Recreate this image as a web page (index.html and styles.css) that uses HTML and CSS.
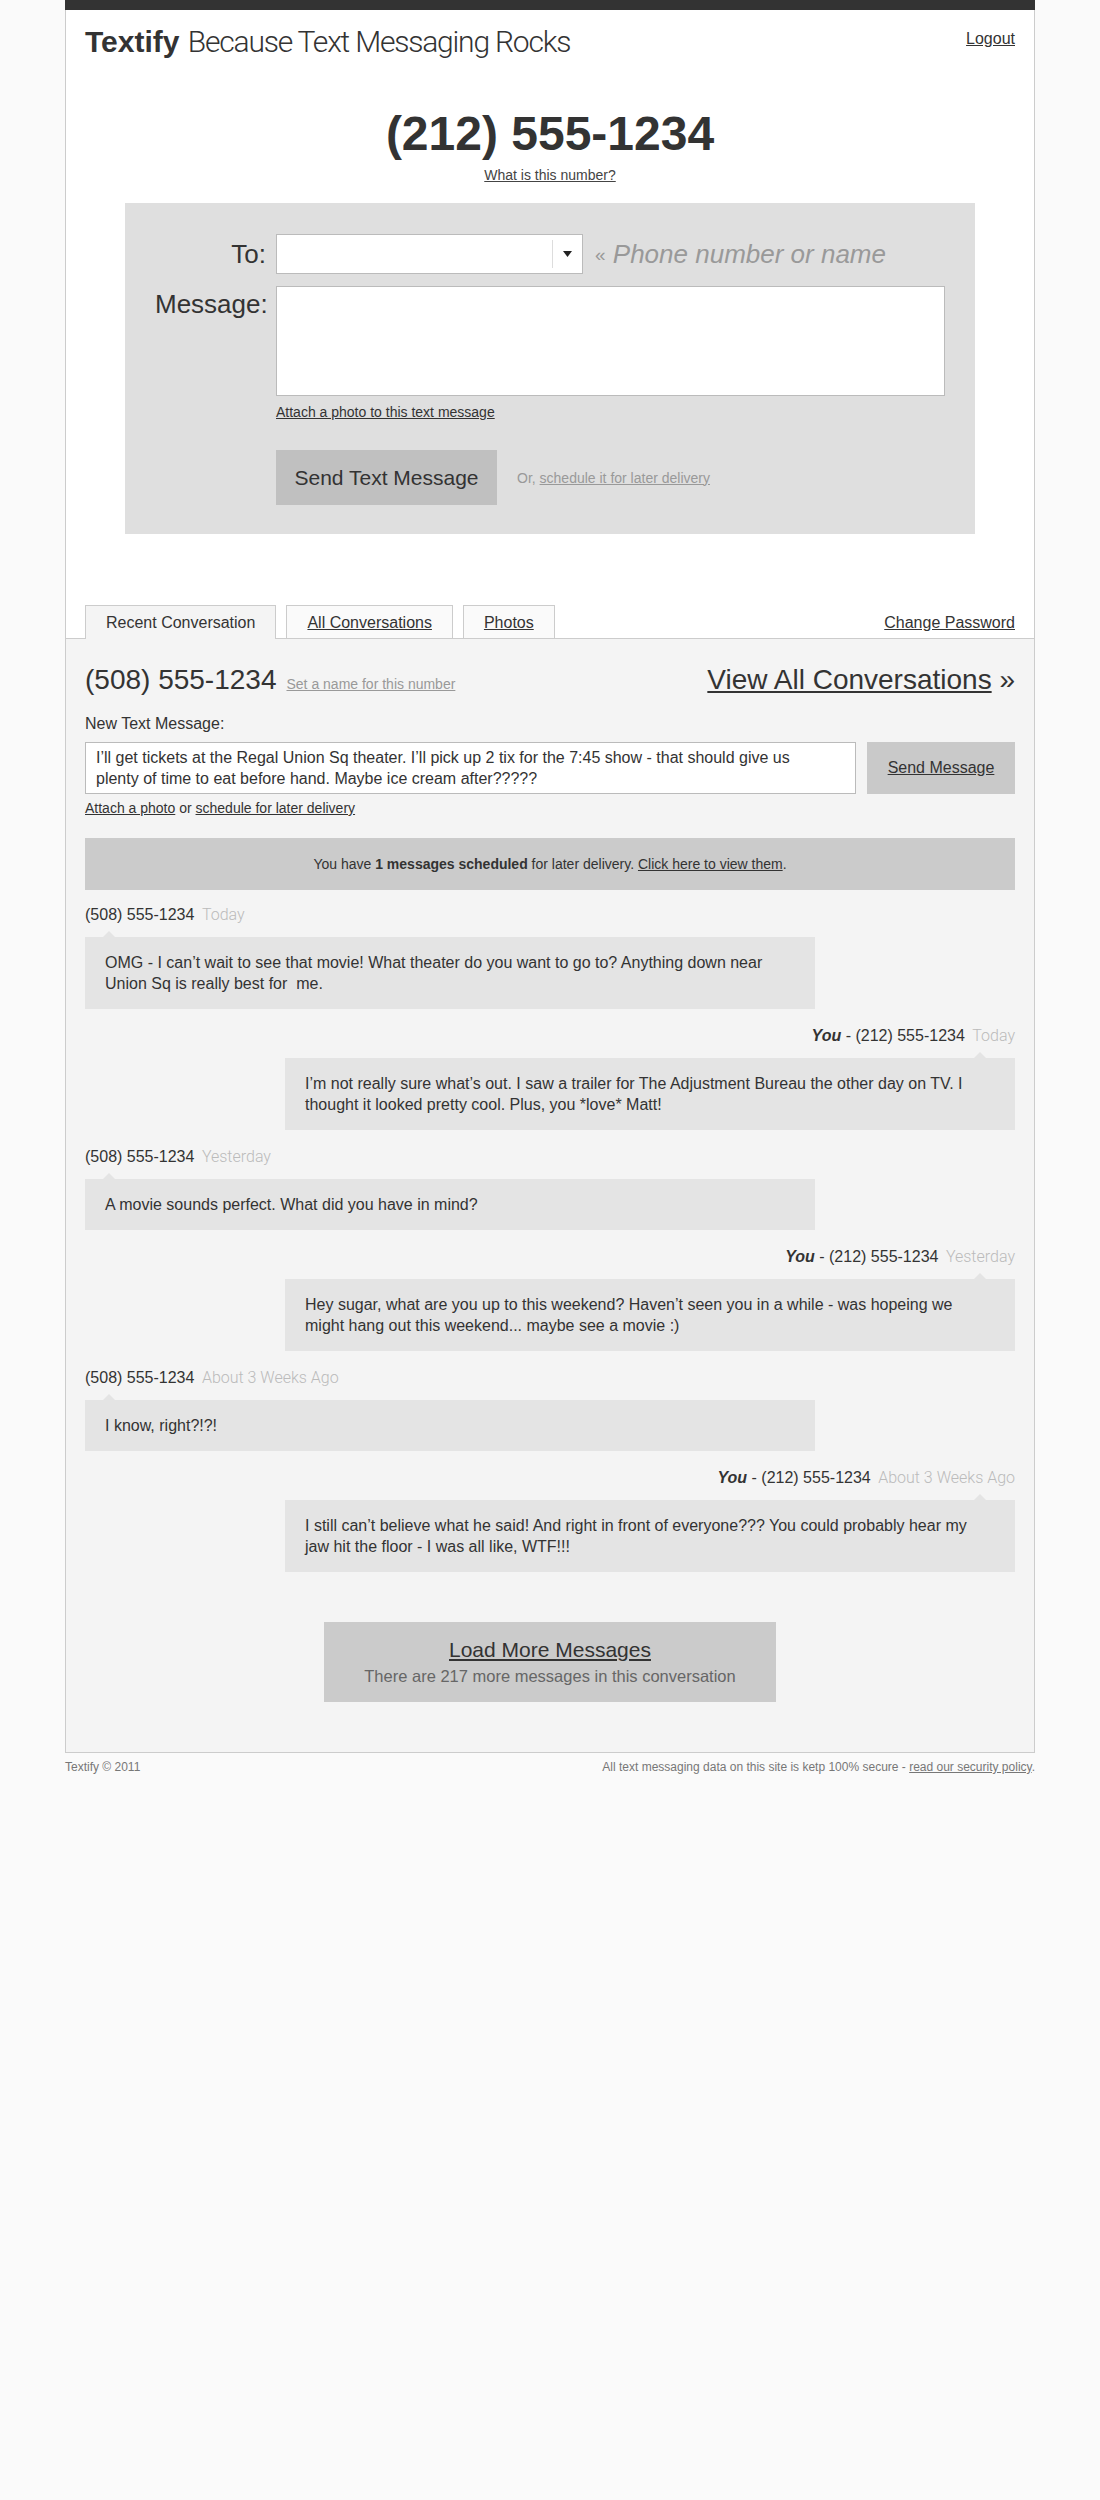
FILE: index.html
```html
<!DOCTYPE html>
<html lang="en">
<head>
<meta charset="utf-8">
<title>Textify - Because Text Messaging Rocks</title>
<link rel="stylesheet" href="styles.css">
</head>
<body>
<div class="page">
  <div class="topbar"></div>
  <div class="main">
    <header class="header">
      <h1 class="brand"><span class="brand-name">Textify</span> <span class="brand-tag">Because Text Messaging Rocks</span></h1>
      <a class="logout" href="#">Logout</a>
    </header>

    <section class="hero">
      <div class="my-number">(212) 555-1234</div>
      <a class="what-link" href="#">What is this number?</a>
    </section>

    <form class="compose">
      <label class="label">To:</label>
      <div class="to-field">
        <div class="select">
          <span class="select-arrow"><svg width="9" height="6" viewBox="0 0 9 6"><path d="M0 0H9L4.5 6Z" fill="#222"/></svg></span>
        </div>
        <span class="hint"><span class="laquo">«</span> Phone number or name</span>
      </div>

      <label class="label label-msg">Message:</label>
      <div class="field">
        <textarea class="msg-input"></textarea>
        <div class="attach-row"><a href="#">Attach a photo to this text message</a></div>
        <div class="send-row">
          <button type="button" class="send-btn">Send Text Message</button>
          <span class="later">Or, <a href="#">schedule it for later delivery</a></span>
        </div>
      </div>
    </form>

    <nav class="tabs">
      <span class="tab active">Recent Conversation</span>
      <a class="tab" href="#">All Conversations</a>
      <a class="tab" href="#">Photos</a>
      <a class="change-pw" href="#">Change Password</a>
    </nav>

    <section class="panel">
      <div class="convo-head">
        <div class="convo-title">
          <span class="convo-number">(508) 555-1234</span>
          <a class="set-name" href="#">Set a name for this number</a>
        </div>
        <div class="view-all"><a href="#">View All Conversations</a> <span class="raquo">»</span></div>
      </div>

      <div class="new-label">New Text Message:</div>
      <div class="reply">
        <textarea class="reply-text">I’ll get tickets at the Regal Union Sq theater. I’ll pick up 2 tix for the 7:45 show - that should give us plenty of time to eat before hand. Maybe ice cream after?????</textarea>
        <button type="button" class="reply-btn">Send Message</button>
      </div>
      <div class="reply-links"><a href="#">Attach a photo</a> or <a href="#">schedule for later delivery</a></div>

      <div class="scheduled">You have <strong>1 messages scheduled</strong> for later delivery. <a href="#">Click here to view them</a>.</div>

      <ul class="messages">
        <li class="msg them">
          <div class="msg-meta"><span class="who">(508) 555-1234</span> <span class="when">Today</span></div>
          <div class="bubble">OMG - I can’t wait to see that movie! What theater do you want to go to? Anything down near Union Sq is really best for&nbsp; me.</div>
        </li>
        <li class="msg me">
          <div class="msg-meta"><span class="who"><b class="you">You</b> - (212) 555-1234</span> <span class="when">Today</span></div>
          <div class="bubble">I’m not really sure what’s out. I saw a trailer for The Adjustment Bureau the other day on TV. I thought it looked pretty cool. Plus, you *love* Matt!</div>
        </li>
        <li class="msg them">
          <div class="msg-meta"><span class="who">(508) 555-1234</span> <span class="when">Yesterday</span></div>
          <div class="bubble">A movie sounds perfect. What did you have in mind?</div>
        </li>
        <li class="msg me">
          <div class="msg-meta"><span class="who"><b class="you">You</b> - (212) 555-1234</span> <span class="when">Yesterday</span></div>
          <div class="bubble">Hey sugar, what are you up to this weekend? Haven’t seen you in a while - was hopeing we might hang out this weekend... maybe see a movie :)</div>
        </li>
        <li class="msg them">
          <div class="msg-meta"><span class="who">(508) 555-1234</span> <span class="when">About 3 Weeks Ago</span></div>
          <div class="bubble">I know, right?!?!</div>
        </li>
        <li class="msg me">
          <div class="msg-meta"><span class="who"><b class="you">You</b> - (212) 555-1234</span> <span class="when">About 3 Weeks Ago</span></div>
          <div class="bubble">I still can’t believe what he said! And right in front of everyone??? You could probably hear my jaw hit the floor - I was all like, WTF!!!</div>
        </li>
      </ul>

      <div class="load-more">
        <a class="load-title" href="#">Load More Messages</a>
        <div class="load-sub">There are 217 more messages in this conversation</div>
      </div>
    </section>
  </div>

  <footer class="footer">
    <span>Textify © 2011</span>
    <span>All text messaging data on this site is ketp 100% secure - <a href="#">read our security policy</a>.</span>
  </footer>
</div>
</body>
</html>
```

FILE: styles.css
```css
* {
  box-sizing: border-box;
}

body {
  margin: 0;
  background: #fafafa;
  font-family: "Liberation Sans", Arial, sans-serif;
  color: #333;
}

a {
  color: #333;
}

.page {
  width: 970px;
  margin: 0 auto;
}

.topbar {
  height: 10px;
  background: #333;
}

.main {
  background: #fff;
  border: 1px solid #ccc;
  border-top: 0;
}

/* Header */
.header {
  display: flex;
  justify-content: space-between;
  align-items: flex-start;
  padding: 14px 19px 0;
}

.brand {
  margin: 0;
  font-size: 30px;
  line-height: 36px;
  font-weight: normal;
  color: #333;
}

.brand-name {
  font-weight: bold;
}

.brand-tag {
  font-family: Roboto, "Liberation Sans", sans-serif;
  font-weight: 300;
  letter-spacing: -1.2px;
}

.logout {
  margin-top: 5px;
  font-size: 16px;
  line-height: 20px;
}

/* Hero */
.hero {
  padding-top: 46px;
  text-align: center;
}

.my-number {
  font-size: 48px;
  line-height: 56px;
  font-weight: bold;
  color: #333;
}

.what-link {
  display: inline-block;
  margin-top: 4px;
  font-size: 14px;
  line-height: 18px;
  color: #444;
}

/* Compose box */
.compose {
  margin: 19px 59px 0;
  background: #dfdfdf;
  padding: 31px 30px 29px;
  display: grid;
  grid-template-columns: 111px 1fr;
  column-gap: 10px;
  row-gap: 12px;
}

.label {
  font-size: 26px;
  line-height: 30px;
  text-align: right;
  align-self: center;
  color: #333;
}

.label-msg {
  align-self: start;
  margin-top: 3px;
}

.to-field {
  display: flex;
  align-items: center;
}

.select {
  width: 307px;
  height: 40px;
  background: #fff;
  border: 1px solid #bbb;
  display: flex;
  justify-content: flex-end;
  align-items: center;
}

.select-arrow {
  width: 30px;
  height: 28px;
  border-left: 1px solid #ddd;
  display: flex;
  align-items: center;
  justify-content: center;
}

.hint {
  margin-left: 12px;
  font-size: 26px;
  font-style: italic;
  color: #999;
}

.laquo {
  font-size: 19px;
  font-style: normal;
  vertical-align: 2px;
}

.field {
  display: flex;
  flex-direction: column;
  align-items: flex-start;
}

.msg-input {
  display: block;
  width: 100%;
  height: 110px;
  background: #fff;
  border: 1px solid #bbb;
  resize: none;
  font-family: "Liberation Sans", Arial, sans-serif;
}

.attach-row {
  margin-top: 7px;
  font-size: 14px;
  line-height: 18px;
}

.send-row {
  display: flex;
  align-items: center;
  gap: 20px;
  margin-top: 29px;
}

.send-btn {
  width: 221px;
  height: 55px;
  padding: 0;
  border: 0;
  background: #c0c0c0;
  font-family: "Liberation Sans", Arial, sans-serif;
  font-size: 21px;
  color: #333;
}

.later {
  font-size: 14px;
  color: #999;
}

.later a {
  color: #999;
}

/* Tabs */
.tabs {
  display: flex;
  align-items: flex-end;
  gap: 10px;
  margin-top: 71px;
  padding: 0 19px;
}

.tab {
  border: 1px solid #ccc;
  border-bottom: 0;
  padding: 7px 20px 5px;
  font-size: 16px;
  line-height: 20px;
  background: #fafafa;
  color: #333;
}

.tab.active {
  position: relative;
  margin-bottom: -1px;
  padding-bottom: 6px;
  background: #f4f4f4;
}

.change-pw {
  margin-left: auto;
  padding-bottom: 5px;
  font-size: 16px;
  line-height: 20px;
}

/* Panel */
.panel {
  background: #f4f4f4;
  border-top: 1px solid #ccc;
  padding: 24px 19px 50px;
}

.convo-head {
  display: flex;
  justify-content: space-between;
  align-items: baseline;
}

.convo-title {
  display: flex;
  align-items: baseline;
  gap: 10px;
}

.convo-number {
  font-size: 28px;
  line-height: 34px;
  color: #333;
}

.set-name {
  font-size: 14px;
  color: #999;
}

.view-all {
  font-size: 28px;
  line-height: 34px;
}

.new-label {
  margin-top: 17px;
  font-size: 16px;
  line-height: 20px;
}

.reply {
  display: flex;
  gap: 11px;
  margin-top: 8px;
}

.reply-text {
  flex: 1;
  height: 52px;
  padding: 4px 24px 4px 10px;
  border: 1px solid #bbb;
  background: #fff;
  font-family: "Liberation Sans", Arial, sans-serif;
  font-size: 16px;
  line-height: 21px;
  color: #333;
  resize: none;
  overflow: hidden;
}

.reply-btn {
  width: 148px;
  height: 52px;
  border: 0;
  background: #c9c9c9;
  font-family: "Liberation Sans", Arial, sans-serif;
  font-size: 16px;
  color: #333;
  text-decoration: underline;
}

.reply-links {
  margin-top: 5px;
  font-size: 14px;
  line-height: 18px;
}

.scheduled {
  margin-top: 21px;
  height: 52px;
  line-height: 52px;
  text-align: center;
  background: #cbcbcb;
  font-size: 14px;
}

/* Messages */
.messages {
  list-style: none;
  margin: 15px 0 0;
  padding: 0;
}

.msg {
  margin-bottom: 17px;
}

.msg:last-child {
  margin-bottom: 0;
}

.msg-meta {
  margin-bottom: 12px;
  font-size: 16px;
  line-height: 20px;
}

.you {
  font-style: italic;
}

.when {
  margin-left: 3px;
  font-family: Roboto, "Liberation Sans", sans-serif;
  font-weight: 300;
  color: #bbb;
}

.bubble {
  position: relative;
  width: 730px;
  padding: 15px 20px;
  background: #e4e4e4;
  font-size: 16px;
  line-height: 21px;
  color: #333;
}

.bubble::before {
  content: "";
  position: absolute;
  top: -6px;
  border-left: 6px solid transparent;
  border-right: 6px solid transparent;
  border-bottom: 6px solid #e4e4e4;
}

.them .bubble::before {
  left: 18px;
}

.me .msg-meta {
  text-align: right;
}

.me .bubble {
  margin-left: auto;
}

.me .bubble::before {
  right: 29px;
}

/* Load more */
.load-more {
  width: 452px;
  margin: 50px auto 0;
  padding: 15px 0 16px;
  background: #cbcbcb;
  text-align: center;
}

.load-title {
  display: block;
  font-size: 21px;
  line-height: 26px;
}

.load-sub {
  margin-top: 3px;
  font-size: 16.5px;
  line-height: 20px;
  color: #666;
}

/* Footer */
.footer {
  display: flex;
  justify-content: space-between;
  padding-top: 6px;
  font-size: 12px;
  line-height: 16px;
  color: #777;
}

.footer a {
  color: #777;
}
```
